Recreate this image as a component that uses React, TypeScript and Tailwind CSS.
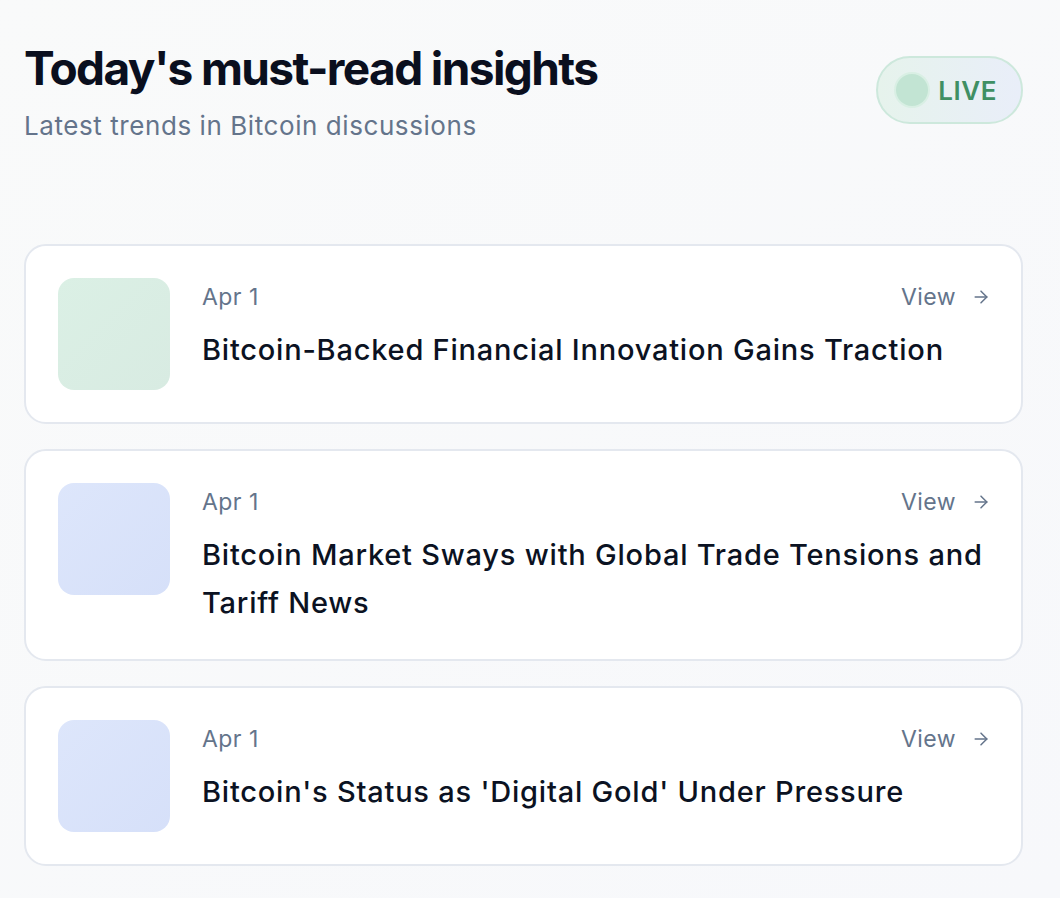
import React from 'react';
import { ArrowRight } from 'lucide-react';

interface Insight {
  date: string;
  title: string;
  thumb: string;
}

const insights: Insight[] = [
  {
    date: 'Apr 1',
    title: 'Bitcoin-Backed Financial Innovation Gains Traction',
    thumb: 'bg-gradient-to-br from-[#dbf0e5] to-[#d8ebe2]',
  },
  {
    date: 'Apr 1',
    title: 'Bitcoin Market Sways with Global Trade Tensions and Tariff News',
    thumb: 'bg-gradient-to-br from-[#dde6fb] to-[#d6e0f9]',
  },
  {
    date: 'Apr 1',
    title: "Bitcoin's Status as 'Digital Gold' Under Pressure",
    thumb: 'bg-gradient-to-br from-[#dde6fb] to-[#d6e0f9]',
  },
];

const InsightCard: React.FC<{ item: Insight }> = ({ item }) => (
  <div className="flex gap-8 rounded-[22px] border-2 border-[#e4e8ef] bg-white pl-[32px] pr-[30px] pt-[32px] pb-[32px]">
    <div className={`h-[112px] w-[112px] shrink-0 rounded-[16px] ${item.thumb}`} />
    <div className="flex-1 pt-[4px]">
      <div className="flex items-center justify-between">
        <span className="text-[23px] leading-[30px] tracking-[0.02em] text-[#64748b]">{item.date}</span>
        <span className="flex items-center gap-[15px] text-[23px] leading-[30px] tracking-[0.02em] text-[#64748b]">
          View
          <ArrowRight className="h-[20px] w-[20px]" strokeWidth={1.8} />
        </span>
      </div>
      <h3 className="mt-[14px] text-[29px] font-medium leading-[48px] tracking-[0.027em] text-[#0b1222]">
        {item.title}
      </h3>
    </div>
  </div>
);

export default function App() {
  return (
    <div
      className="min-h-[898px] bg-gradient-to-br from-[#f9fafa] to-[#f7f8fb] pl-[24px] pr-[37px] pt-[38px] pb-[34px]"
      style={{ fontFamily: 'Inter, "Noto Sans", sans-serif' }}
    >
      {/* Header */}
      <div className="flex items-start justify-between">
        <div>
          <h1 className="text-[46px] font-bold leading-[60px] tracking-[-0.035em] text-[#0a0f1e]">
            Today's must-read insights
          </h1>
          <p className="mt-[12px] text-[26px] leading-[32px] tracking-[0.022em] text-[#64748b]">
            Latest trends in Bitcoin discussions
          </p>
        </div>
        <div className="mt-[18px] flex h-[68px] items-center gap-[10px] rounded-full border-2 border-[#cde8dc] bg-gradient-to-r from-[#e6f3ec] to-[#e9eef9] pl-[18px] pr-[24px]">
          <span className="h-[32px] w-[32px] rounded-full bg-[#c2e4d3] ring-2 ring-[#d9efe4]" />
          <span className="text-[26px] font-semibold tracking-[0.02em] text-[#3f8f63]">LIVE</span>
        </div>
      </div>

      {/* Cards */}
      <div className="mt-[102px] flex flex-col gap-[25px]">
        {insights.map((item, i) => (
          <InsightCard key={i} item={item} />
        ))}
      </div>
    </div>
  );
}
